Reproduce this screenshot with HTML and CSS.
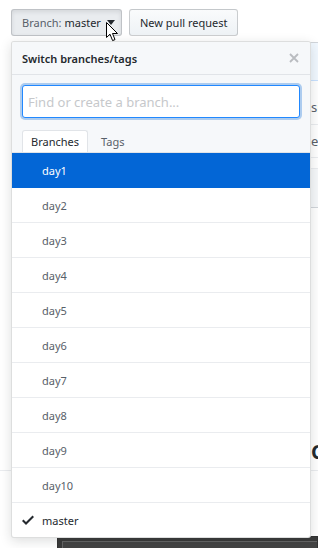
FILE: index.html
```html
<!DOCTYPE html>
<html lang="en">
<head>
    <meta charset="UTF-8">
    <meta name="viewport" content="width=device-width, initial-scale=1.0">
    <title>Switch branches</title>
    <link rel="stylesheet" href="styles.css">
</head>
<body>

<div class="page">
    <div class="toolbar">
        <button class="btn btn-branch">Branch: <span class="branch-name">master</span><span class="caret"></span></button>
        <button class="btn">New pull request</button>
    </div>

    <!-- content behind the menu -->
    <div class="file-box">
        <div class="file-head"></div>
        <div class="file-row">sion</div>
        <div class="file-row">edit</div>
        <div class="file-gap"></div>
        <div class="file-band"></div>
    </div>
    <h2 class="readme-title">Commits</h2>
    <div class="code-bar"></div>

    <div class="select-menu">
        <div class="menu-header">
            <span class="menu-title">Switch branches/tags</span>
            <svg class="menu-close" width="10" height="10" viewBox="0 0 10 10">
                <path d="M1 1 L9 9 M9 1 L1 9" stroke="#b9bcc0" stroke-width="1.8"/>
            </svg>
        </div>
        <div class="menu-filter">
            <input type="text" class="filter-input" placeholder="Find or create a branch...">
            <div class="menu-tabs">
                <span class="tab selected">Branches</span>
                <span class="tab">Tags</span>
            </div>
        </div>
        <div class="menu-list">
            <div class="menu-item navigation-focus">day1</div>
            <div class="menu-item">day2</div>
            <div class="menu-item">day3</div>
            <div class="menu-item">day4</div>
            <div class="menu-item">day5</div>
            <div class="menu-item">day6</div>
            <div class="menu-item">day7</div>
            <div class="menu-item">day8</div>
            <div class="menu-item">day9</div>
            <div class="menu-item">day10</div>
            <div class="menu-item current">
                <svg class="check" width="12" height="16" viewBox="0 0 12 16"><path fill="#24292e" d="M12 5l-8 8-4-4 1.5-1.5L4 10l6.5-6.5L12 5z"/></svg>
                master
            </div>
        </div>
    </div>

    <svg class="mouse" width="13" height="20" viewBox="0 0 13 20">
        <path d="M0.5 0.5 L0.5 15.5 L4 12.2 L6.6 18.6 L9 17.6 L6.5 11.5 L11.5 11.5 Z" fill="#fff" stroke="#000" stroke-width="1" stroke-linejoin="round"/>
    </svg>
</div>

</body>
</html>
```

FILE: styles.css
```css
/* General */
body {
    margin: 0;
    font-family: "Noto Sans", "Open Sans", sans-serif;
    font-size: 11px;
    color: #24292e;
    background: #fff;
    overflow: hidden;
}

.page {
    position: relative;
    width: 318px;
    height: 548px;
    overflow: hidden;
}

/* Toolbar buttons */
.toolbar {
    display: flex;
    gap: 7px;
    padding: 9px 11px 0;
}

.btn {
    height: 27px;
    padding: 0 10px;
    font-family: inherit;
    font-size: 11px;
    color: #24292e;
    background-image: linear-gradient(-180deg, #fafbfc 0%, #eff3f6 90%);
    border: 1px solid rgba(27, 31, 35, 0.2);
    border-radius: 3px;
}

.btn-branch {
    display: flex;
    align-items: center;
    width: 111px;
    color: #586069;
    background: #e9ecef;
    box-shadow: inset 0 2px 4px rgba(27, 31, 35, 0.1);
}

.branch-name {
    margin-left: 3px;
    color: #24292e;
}

.caret {
    margin-left: 6px;
    border-top: 5px solid #24292e;
    border-left: 4px solid transparent;
    border-right: 4px solid transparent;
}

/* Page content hidden under the menu */
.file-box {
    margin: 6px 0 0 11px;
    width: 400px;
    border: 1px solid #d1d5da;
    border-radius: 3px;
}

.file-head {
    height: 37px;
    background: #f1f8ff;
    border-bottom: 1px solid #c8e1ff;
}

.file-row {
    height: 33px;
    line-height: 33px;
    padding: 10px 0 0 299px;
    font-size: 13px;
    color: #586069;
    border-bottom: 1px solid #eaecef;
}

.file-row + .file-row {
    height: 32px;
    line-height: 32px;
    padding-top: 0;
}

.file-gap {
    height: 10px;
}

.file-band {
    height: 38px;
    background: #f6f8fa;
    border-top: 1px solid #eaecef;
}

.readme-title {
    margin: 232px 0 0;
    padding: 0 0 6px 311px;
    font-size: 20px;
    line-height: 24px;
    font-weight: 700;
    border-bottom: 1px solid #eaecef;
}

.code-bar {
    margin: 65px 0 0 57px;
    height: 12px;
    background: #444;
    border: 1px solid #333;
    box-shadow: inset 4px 4px 0 #3a3a3a, inset 5px 5px 0 #666;
}

/* Branch select menu */
.select-menu {
    position: absolute;
    top: 41px;
    left: 11px;
    width: 298px;
    background: #fff;
    border: 1px solid rgba(27, 31, 35, 0.15);
    border-radius: 3px;
    box-shadow: 0 3px 12px rgba(27, 31, 35, 0.15);
    overflow: hidden;
}

.menu-header {
    display: flex;
    align-items: center;
    justify-content: space-between;
    height: 32px;
    padding: 0 10px;
    background: #f6f8fa;
    border-bottom: 1px solid #e1e4e8;
}

.menu-title {
    font-weight: 600;
    color: #24292e;
}

.menu-close {
    margin-right: 1px;
}

.menu-filter {
    padding: 10px 10px 0;
    background: #f6f8fa;
    border-bottom: 1px solid #e1e4e8;
}

.filter-input {
    box-sizing: border-box;
    display: block;
    width: 100%;
    height: 33px;
    padding: 5px 5px;
    font-family: inherit;
    font-size: 13px;
    border: 1px solid #2188ff;
    border-radius: 3px;
    outline: none;
    box-shadow: 0 0 0 2px rgba(3, 102, 214, 0.3);
}

.filter-input::placeholder {
    color: #c6c8cb;
}

.menu-tabs {
    display: flex;
    margin-top: 12px;
}

.tab {
    height: 21px;
    line-height: 22px;
    padding: 0 8px;
    color: #586069;
    border: 1px solid transparent;
    border-bottom: 0;
    border-radius: 3px 3px 0 0;
}

.tab + .tab {
    margin-left: 4px;
}

.tab.selected {
    color: #24292e;
    background: #fff;
    border-color: #e1e4e8;
    margin-bottom: -1px;
}

.menu-item {
    display: flex;
    align-items: center;
    height: 34px;
    padding-left: 30px;
    color: #586069;
    border-bottom: 1px solid #eaecef;
    position: relative;
}

.menu-item:last-child {
    border-bottom: 0;
}

.menu-item.navigation-focus {
    color: #fff;
    background: #0366d6;
    border-bottom-color: #0366d6;
}

.menu-item.current {
    color: #24292e;
}

.check {
    position: absolute;
    left: 10px;
    top: 9px;
}

.mouse {
    position: absolute;
    left: 106px;
    top: 22px;
}
```
